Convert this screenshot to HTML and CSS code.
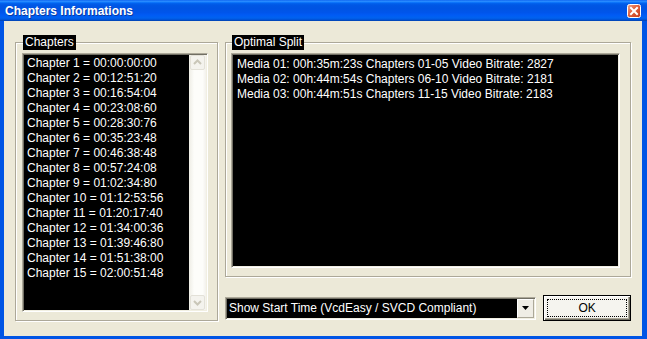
FILE: index.html
```html
<!DOCTYPE html>
<html lang="en">
<head>
    <meta charset="UTF-8">
    <title>Chapters Informations</title>
    <link rel="stylesheet" href="styles.css">
</head>
<body>
    <div class="titlebar">
        <span class="title">Chapters Informations</span>
        <span class="close-btn">
            <svg width="14" height="14" viewBox="0 0 14 14">
                <defs>
                    <linearGradient id="closeFill" x1="0" y1="0" x2="1" y2="1">
                        <stop offset="0" stop-color="#F0A68A"/>
                        <stop offset="0.45" stop-color="#E0603C"/>
                        <stop offset="1" stop-color="#C23A1A"/>
                    </linearGradient>
                </defs>
                <rect x="0.5" y="0.5" width="13" height="13" rx="2" fill="url(#closeFill)" stroke="#fff"/>
                <path d="M4 4 L10 10 M10 4 L4 10" stroke="#fff" stroke-width="2" stroke-linecap="square"/>
            </svg>
        </span>
    </div>
    <div class="frame">
        <div class="client">
            <fieldset class="group group-chapters">
                <legend>Chapters</legend>
                <div class="listbox listbox-chapters">
                    <ul class="list-items">
                        <li>Chapter 1 = 00:00:00:00</li>
                        <li>Chapter 2 = 00:12:51:20</li>
                        <li>Chapter 3 = 00:16:54:04</li>
                        <li>Chapter 4 = 00:23:08:60</li>
                        <li>Chapter 5 = 00:28:30:76</li>
                        <li>Chapter 6 = 00:35:23:48</li>
                        <li>Chapter 7 = 00:46:38:48</li>
                        <li>Chapter 8 = 00:57:24:08</li>
                        <li>Chapter 9 = 01:02:34:80</li>
                        <li>Chapter 10 = 01:12:53:56</li>
                        <li>Chapter 11 = 01:20:17:40</li>
                        <li>Chapter 12 = 01:34:00:36</li>
                        <li>Chapter 13 = 01:39:46:80</li>
                        <li>Chapter 14 = 01:51:38:00</li>
                        <li>Chapter 15 = 02:00:51:48</li>
                    </ul>
                    <div class="scrollbar">
                        <div class="scroll-btn">
                            <svg width="13" height="13" viewBox="0 0 13 13"><polyline points="3,8 6.5,4.5 10,8" fill="none" stroke="#C9C6B8" stroke-width="2"/></svg>
                        </div>
                        <div class="scroll-track"></div>
                        <div class="scroll-btn">
                            <svg width="13" height="13" viewBox="0 0 13 13"><polyline points="3,5 6.5,8.5 10,5" fill="none" stroke="#C9C6B8" stroke-width="2"/></svg>
                        </div>
                    </div>
                </div>
            </fieldset>
            <div class="right-col">
                <fieldset class="group group-split">
                    <legend>Optimal Split</legend>
                    <div class="listbox listbox-split">
                        <ul class="list-items">
                            <li>Media 01: 00h:35m:23s Chapters 01-05 Video Bitrate: 2827</li>
                            <li>Media 02: 00h:44m:54s Chapters 06-10 Video Bitrate: 2181</li>
                            <li>Media 03: 00h:44m:51s Chapters 11-15 Video Bitrate: 2183</li>
                        </ul>
                    </div>
                </fieldset>
                <div class="bottom-row">
                    <div class="combo">
                        <span class="combo-value">Show Start Time (VcdEasy / SVCD Compliant)</span>
                        <span class="combo-btn">
                            <svg width="7" height="4" viewBox="0 0 7 4"><polygon points="0,0 7,0 3.5,4" fill="#000"/></svg>
                        </span>
                    </div>
                    <button class="ok-btn"><span class="focus-rect">OK</span></button>
                </div>
            </div>
        </div>
    </div>
</body>
</html>
```

FILE: styles.css
```css
*{
    box-sizing: border-box;
}
body{
    margin: 0;
    width: 647px;
    height: 339px;
    overflow: hidden;
    font-family: "Liberation Sans", Arial, sans-serif;
    font-size: 12px;
    background-color: #0055E5;
}
.titlebar{
    height: 21px;
    display: flex;
    align-items: center;
    justify-content: space-between;
    padding: 0 6px 0 5px;
    background: linear-gradient(to bottom, #0058EE 0%, #3593FF 5%, #127DFF 10%, #0262EE 16%, #0057E5 24%, #0054E3 40%, #0055EB 60%, #005BF5 72%, #0062EF 86%, #0052D6 94%, #0040AB 100%);
}
.title{
    color: white;
    font-weight: bold;
    font-size: 12px;
    text-shadow: 1px 1px 0 #0A3AA0;
}
.close-btn{
    display: flex;
    margin-top: 1px;
}
.frame{
    height: 318px;
    border-style: solid;
    border-color: #0055E5;
    border-width: 0 5px 3px 4px;
}
.client{
    height: 100%;
    display: flex;
    align-items: flex-start;
    padding: 14px 0 0 11px;
    background-color: #ECE9D8;
}
.group{
    margin: 0;
    min-width: 0;
    border: 1px solid #ACA899;
    box-shadow: inset 1px 1px 0 #fff, 1px 1px 0 #fff;
}
.group legend{
    margin-left: 1px;
    padding: 0 2px;
    line-height: 15px;
    background-color: black;
    color: white;
}
.group-chapters{
    width: 203px;
    padding: 3px 9px 8px 6px;
}
.right-col{
    width: 406px;
    margin-left: 7px;
    display: flex;
    flex-direction: column;
}
.group-split{
    width: 406px;
    padding: 3px 10px 8px 5px;
}
.listbox{
    display: flex;
    background-color: black;
    border: 1px solid;
    border-color: #ACA899 #fff #fff #ACA899;
    box-shadow: inset 1px 1px 0 #716F64, inset -1px -1px 0 #F1EFE2;
    padding: 1px;
}
.listbox-chapters{
    height: 259px;
}
.listbox-split{
    height: 215px;
}
.list-items{
    list-style: none;
    margin: 0;
    padding: 1px 0 0 3px;
    flex: 1;
    color: white;
    line-height: 15px;
    white-space: nowrap;
}
.listbox-split .list-items{
    padding-top: 2px;
    padding-left: 4px;
}
.scrollbar{
    width: 17px;
    display: flex;
    flex-direction: column;
    background: linear-gradient(to right, #EEEDE5, #FDFDFA 30%, #FDFDFA 80%, #F3F1EC);
}
.scroll-btn{
    width: 15px;
    height: 15px;
    margin: 0 1px;
    display: flex;
    align-items: center;
    justify-content: center;
    border: 1px solid #E3E1D8;
    border-radius: 2px;
    background-color: #F4F3EE;
}
.scroll-track{
    flex: 1;
}
.bottom-row{
    display: flex;
    align-items: center;
    margin-top: 18px;
}
.combo{
    width: 312px;
    height: 23px;
    display: flex;
    border: 1px solid;
    border-color: #ACA899 #fff #fff #ACA899;
    box-shadow: inset 1px 1px 0 #716F64, inset -1px -1px 0 #F1EFE2;
    padding: 1px;
    background-color: black;
}
.combo-value{
    flex: 1;
    padding-left: 2px;
    line-height: 19px;
    color: white;
    white-space: nowrap;
}
.combo-btn{
    width: 17px;
    display: flex;
    align-items: center;
    justify-content: center;
    background-color: #EFEDE5;
    border: 1px solid;
    border-color: #fff #ACA899 #ACA899 #fff;
}
.ok-btn{
    width: 88px;
    height: 26px;
    margin-left: 7px;
    padding: 3px;
    border: 1px solid black;
    background-color: #F5F4EF;
    box-shadow: inset 1px 1px 0 #fff, inset -1px -1px 0 #716F64, inset -2px -2px 0 #ACA899;
    font-family: "Liberation Sans", Arial, sans-serif;
    font-size: 12px;
    color: black;
}
.focus-rect{
    display: flex;
    align-items: center;
    justify-content: center;
    height: 100%;
    border: 1px dotted black;
}
```
